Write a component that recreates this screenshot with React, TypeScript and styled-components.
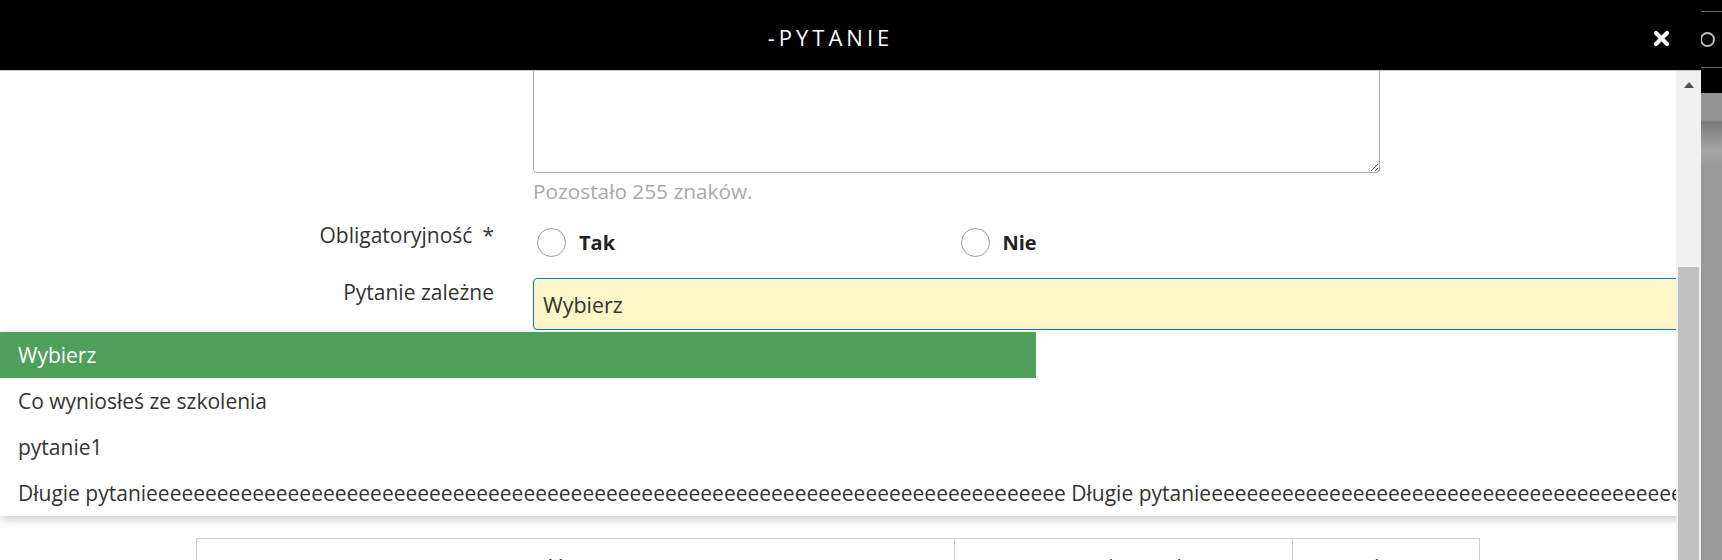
import React from "react";
import styled, { createGlobalStyle } from "styled-components";

const GlobalStyle = createGlobalStyle`
  html, body { margin: 0; padding: 0; background: #fff; }
  body {
    font-family: "Open Sans", "Noto Sans", sans-serif;
    width: 1722px;
    height: 560px;
    overflow: hidden;
  }
  * { box-sizing: border-box; }
`;

const Screen = styled.div`
  display: flex;
  width: 1722px;
  height: 560px;
  overflow: hidden;
`;

const Modal = styled.div`
  width: 1701px;
  flex: none;
  display: flex;
  flex-direction: column;
  background: #fff;
`;

const Header = styled.header`
  height: 71px;
  flex: none;
  background: #000;
  border-bottom: 1px solid #c8c8c8;
  display: flex;
  align-items: center;
`;

const Title = styled.h1`
  flex: 1;
  margin: 0;
  padding: 3px 0 0 8px;
  text-align: center;
  color: #fff;
  font-weight: 400;
  font-size: 22px;
  letter-spacing: 4px;
`;

const CloseButton = styled.button`
  border: 0;
  background: none;
  padding: 0;
  width: 17px;
  height: 17px;
  margin: 7px 31px 0 0;
  display: flex;
  cursor: pointer;
`;

const Body = styled.div`
  flex: 1;
  display: flex;
  min-height: 0;
`;

const Viewport = styled.div`
  flex: 1;
  position: relative;
  overflow: hidden;
`;

const Scroller = styled.div`
  margin-top: -40px;
`;

const FormRow = styled.div<{ $gap?: number }>`
  display: grid;
  grid-template-columns: 494px 1fr;
  column-gap: 39px;
  margin-top: ${(p) => p.$gap ?? 0}px;
  align-items: start;
`;

const Label = styled.label<{ $offset?: number }>`
  text-align: right;
  font-size: 21px;
  line-height: 27px;
  padding-top: ${(p) => p.$offset ?? 0}px;
  color: #333;
  white-space: nowrap;
`;

const Required = styled.span`
  margin-left: 10px;
`;

const Field = styled.div`
  position: relative;
  min-width: 0;
`;

const TextArea = styled.textarea`
  display: block;
  width: 847px;
  height: 142px;
  border: 1px solid #a9a9a9;
  border-radius: 4px;
  font-family: inherit;
  font-size: 20px;
  background: #fff;
  outline: none;
`;

const Hint = styled.div`
  margin-top: 5px;
  font-size: 20.8px;
  line-height: 27px;
  color: #a9a9a9;
`;

const RadioGroup = styled.div`
  width: 847px;
  padding-top: 7px;
  display: grid;
  grid-template-columns: 1fr 1fr;
`;

const RadioItem = styled.label`
  display: flex;
  align-items: center;
  gap: 13px;
  padding-left: 4px;
  font-size: 20px;
  font-weight: 700;
  color: #222;
  line-height: 27px;
`;

const RadioCircle = styled.span`
  width: 29px;
  height: 29px;
  border: 1px solid #9c9c9c;
  border-radius: 50%;
  background: #fff;
  flex: none;
`;

const Select = styled.div`
  width: calc(100% + 24px);
  height: 52px;
  border: 1px solid #0a78d6;
  border-radius: 4px;
  background: #fff6c7;
  padding-left: 9px;
  display: flex;
  align-items: center;
  font-size: 21.4px;
  color: #333;
`;

const Dropdown = styled.ul`
  position: absolute;
  top: calc(100% + 2px);
  left: -533px;
  width: 1710px;
  margin: 0;
  padding: 0;
  list-style: none;
  background: #fff;
  box-shadow: 0 3px 9px rgba(0, 0, 0, 0.22);
  z-index: 5;
  overflow: hidden;
`;

const Option = styled.li<{ $active?: boolean }>`
  width: 1036px;
  height: 46px;
  line-height: 46px;
  padding-left: 18px;
  font-size: 21px;
  white-space: nowrap;
  color: ${(p) => (p.$active ? "#fff" : "#333")};
  background: ${(p) => (p.$active ? "#4fa05a" : "transparent")};
`;

const Table = styled.div`
  width: 1284px;
  margin: 208px auto 0;
  border: 1px solid #cfcfcf;
  display: grid;
  grid-template-columns: 757px 338px 1fr;
`;

const HeadCell = styled.div`
  padding: 14px 8px 12px;
  text-align: center;
  font-size: 20px;
  line-height: 27px;
  color: #333;
  & + & {
    border-left: 1px solid #cfcfcf;
  }
`;

const Scrollbar = styled.div`
  width: 25px;
  flex: none;
  background: #f1f1f1;
  display: flex;
  flex-direction: column;
  align-items: stretch;
  padding: 0 2px;
`;

const ArrowUp = styled.div`
  align-self: center;
  width: 0;
  height: 0;
  margin-top: 11px;
  border-left: 5px solid transparent;
  border-right: 5px solid transparent;
  border-bottom: 6px solid #505050;
`;

const Thumb = styled.div`
  margin-top: 179px;
  height: 300px;
  background: #c1c1c1;
`;

const BackStrip = styled.div`
  flex: 1;
  display: flex;
  flex-direction: column;
  overflow: hidden;
  background: linear-gradient(
    to bottom,
    #959595 0px,
    #959595 36px,
    #8a8a8a 37px,
    #939393 38px,
    #939393 120px,
    #7a7a7a 122px,
    #a5a5a5 150px,
    #999 168px,
    #999 100%
  );
`;

const StripTop = styled.div`
  height: 93px;
  flex: none;
  background: #000;
  padding-top: 11px;
`;

const StripBar = styled.div`
  height: 57px;
  border-top: 1px solid #6a6a6a;
  border-bottom: 1px solid #6a6a6a;
  display: flex;
  align-items: center;
`;

const Ring = styled.span`
  width: 15px;
  height: 15px;
  margin-left: -1px;
  border: 2px solid #bdbdbd;
  border-radius: 50%;
  flex: none;
`;

const longText =
  "Długie pytani" + "e".repeat(78) + " Długie pytani" + "e".repeat(80);

export default function App() {
  return (
    <>
      <GlobalStyle />
      <Screen>
        <Modal>
          <Header>
            <Title>-PYTANIE</Title>
            <CloseButton aria-label="Zamknij">
              <svg width="17" height="17" viewBox="0 0 17 17">
                <path
                  d="M3 3 L14 14 M14 3 L3 14"
                  stroke="#fff"
                  strokeWidth="4.2"
                  strokeLinecap="round"
                />
              </svg>
            </CloseButton>
          </Header>
          <Body>
            <Viewport>
              <Scroller>
                <FormRow>
                  <Label />
                  <Field>
                    <TextArea readOnly />
                    <Hint>Pozostało 255 znaków.</Hint>
                  </Field>
                </FormRow>
                <FormRow $gap={16}>
                  <Label $offset={1}>
                    Obligatoryjność<Required>*</Required>
                  </Label>
                  <RadioGroup>
                    <RadioItem>
                      <RadioCircle />
                      Tak
                    </RadioItem>
                    <RadioItem>
                      <RadioCircle />
                      Nie
                    </RadioItem>
                  </RadioGroup>
                </FormRow>
                <FormRow $gap={21}>
                  <Label $offset={1}>Pytanie zależne</Label>
                  <Field>
                    <Select>Wybierz</Select>
                    <Dropdown>
                      <Option $active>Wybierz</Option>
                      <Option>Co wyniosłeś ze szkolenia</Option>
                      <Option>pytanie1</Option>
                      <Option>{longText}</Option>
                    </Dropdown>
                  </Field>
                </FormRow>
                <Table>
                  <HeadCell>Treść pytania</HeadCell>
                  <HeadCell>Typ odpowiedzi</HeadCell>
                  <HeadCell>Akcje</HeadCell>
                </Table>
              </Scroller>
            </Viewport>
            <Scrollbar>
              <ArrowUp />
              <Thumb />
            </Scrollbar>
          </Body>
        </Modal>
        <BackStrip>
          <StripTop>
            <StripBar>
              <Ring />
            </StripBar>
          </StripTop>
        </BackStrip>
      </Screen>
    </>
  );
}
